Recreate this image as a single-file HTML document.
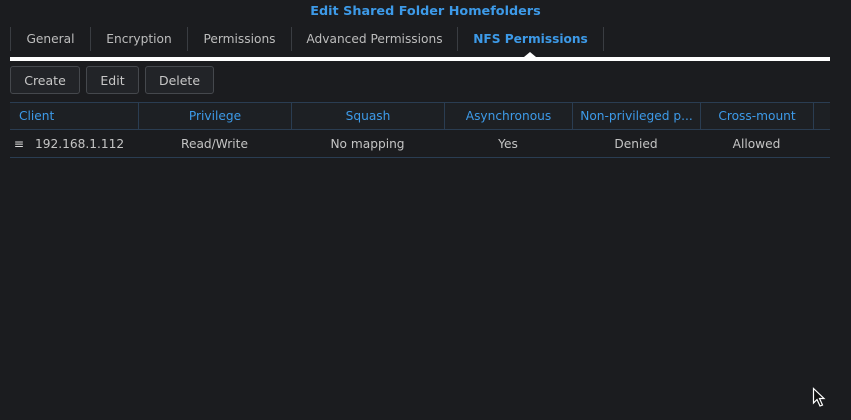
<!DOCTYPE html>
<html><head><style>
*{margin:0;padding:0;box-sizing:border-box}
body{width:851px;height:420px;background:#1b1c1f;font-family:"DejaVu Sans","Liberation Sans",sans-serif;font-size:12px;color:#c8c8c8;position:relative;overflow:hidden}
.a{position:absolute}
.title{top:4px;left:0;width:851px;text-align:center;color:#3d9ae8;font-weight:bold;font-size:12.8px}
.tab{top:27px;height:24px;line-height:24px;text-align:center;border-left:1px solid #3a3d42;color:#bdbdbd;font-size:12.2px}
.btn{top:66px;height:28px;line-height:28px;text-align:center;border:1px solid #45484d;border-radius:3px;background:#222428;color:#c8c8c8;font-size:12.5px}
.hd{top:102px;height:28px;line-height:29px;color:#3d9ae8;text-align:center;border-left:1px solid #2a3d52;font-size:12.2px}
.cell{top:130px;height:27px;line-height:29px;text-align:center;color:#c4c4c4;font-size:12.2px}
</style></head><body>
<div class="a title">Edit Shared Folder Homefolders</div>
<div class="a tab" style="left:10px;width:80px">General</div>
<div class="a tab" style="left:90px;width:97px">Encryption</div>
<div class="a tab" style="left:187px;width:104px">Permissions</div>
<div class="a tab" style="left:291px;width:166px">Advanced Permissions</div>
<div class="a tab" style="left:457px;width:146px;color:#3d9ae8;font-weight:bold">NFS Permissions</div>
<div class="a" style="left:603px;top:27px;width:1px;height:24px;background:#3a3d42"></div>
<div class="a" style="left:10px;top:57px;width:820px;height:4px;background:#fff"></div>
<div class="a" style="left:524px;top:52px;width:0;height:0;border-left:6px solid transparent;border-right:6px solid transparent;border-bottom:5px solid #fff"></div>
<div class="a btn" style="left:10px;width:70px">Create</div>
<div class="a btn" style="left:86px;width:53px">Edit</div>
<div class="a btn" style="left:145px;width:69px">Delete</div>
<div class="a" style="left:10px;top:102px;width:820px;height:28px;background:#1d2024;border-top:1px solid #2a3d52;border-bottom:1px solid #2a3d52"></div>
<div class="a hd" style="left:10px;width:128px;text-align:left;padding-left:9px;border-left:none">Client</div>
<div class="a hd" style="left:138px;width:153px">Privilege</div>
<div class="a hd" style="left:291px;width:153px">Squash</div>
<div class="a hd" style="left:444px;width:128px">Asynchronous</div>
<div class="a hd" style="left:572px;width:128px">Non-privileged p...</div>
<div class="a hd" style="left:700px;width:113px">Cross-mount</div>
<div class="a" style="left:813px;top:102px;width:1px;height:28px;background:#2a3d52"></div>
<div class="a" style="left:10px;top:157px;width:820px;height:1px;background:#2a3d52"></div>
<div class="a cell" style="left:13px;width:12px;color:#ddd">≡</div>
<div class="a cell" style="left:35px;text-align:left">192.168.1.112</div>
<div class="a cell" style="left:138px;width:153px">Read/Write</div>
<div class="a cell" style="left:291px;width:153px">No mapping</div>
<div class="a cell" style="left:444px;width:128px">Yes</div>
<div class="a cell" style="left:572px;width:128px">Denied</div>
<div class="a cell" style="left:700px;width:113px">Allowed</div>
<svg class="a" style="left:812px;top:387px" width="16" height="22" viewBox="0 0 16 22"><path d="M1.5 1.5 L1.5 16 L5 12.5 L8 19 L10.5 18 L7.5 11.5 L12 11.5 Z" fill="#111" stroke="#fff" stroke-width="1.2"/></svg>
</body></html>
